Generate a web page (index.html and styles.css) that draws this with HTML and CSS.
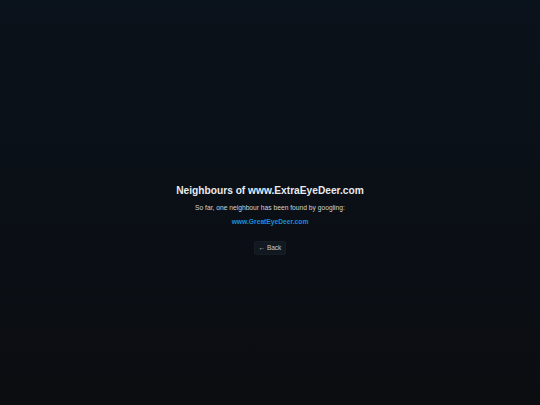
FILE: index.html
```html
<!DOCTYPE html>
<html lang="en">
<head>
<meta charset="utf-8">
<title>Neighbours of www.ExtraEyeDeer.com</title>
<link rel="stylesheet" href="styles.css">
</head>
<body>
<main class="page">
  <h1 class="title">Neighbours of www.ExtraEyeDeer.com</h1>
  <p class="lead">So far, one neighbour has been found by googling:</p>
  <a class="neighbour" href="#">www.GreatEyeDeer.com</a>
  <a class="back" href="#">&larr; Back</a>
</main>
</body>
</html>
```
FILE: styles.css
```css
html, body {
  margin: 0;
  height: 100%;
}
body {
  background: linear-gradient(to bottom, #0a121b 0%, #0b0f15 60%, #0b0d11 100%);
  font-family: "Liberation Sans", Arial, sans-serif;
  color: #e6e9ee;
}
.page {
  height: 100%;
  display: flex;
  flex-direction: column;
  align-items: center;
  justify-content: center;
  text-align: center;
  padding-top: 34px;
  box-sizing: border-box;
}
.title {
  margin: 0;
  font-size: 10.2px;
  font-weight: bold;
  line-height: 12px;
  color: #e8ebf0;
}
.lead {
  margin: 7px 0 0;
  font-size: 6.7px;
  line-height: 8px;
  color: #d0d4da;
}
.neighbour {
  margin-top: 6px;
  font-size: 6.7px;
  line-height: 8px;
  font-weight: bold;
  color: #1a8fd6;
  text-decoration: none;
}
.back {
  margin-top: 15px;
  padding: 2px 4px;
  font-size: 6.5px;
  line-height: 8px;
  color: #c8ccd2;
  background: #111820;
  border: 1px solid #161d26;
  border-radius: 2px;
  text-decoration: none;
}
```
